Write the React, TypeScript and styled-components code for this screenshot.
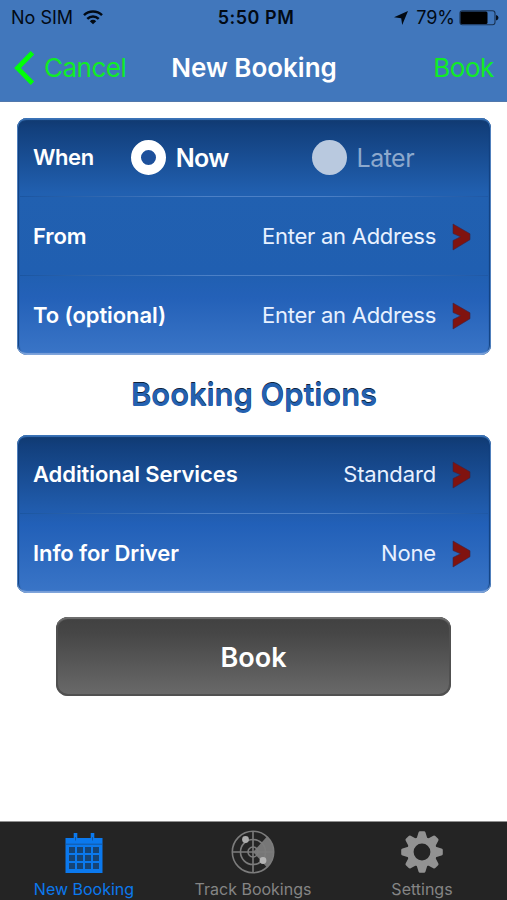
import React from "react";
import styled, { createGlobalStyle, css } from "styled-components";

const GlobalStyle = createGlobalStyle`
  * { box-sizing: border-box; }
  body { margin: 0; background: #fff; font-family: Inter, "Liberation Sans", sans-serif; }
`;

const Screen = styled.div`
  display: flex;
  flex-direction: column;
  width: 507px;
  height: 900px;
  overflow: hidden;
  background: #fff;
`;

interface TextProps {
  $size: number;
  $weight?: number;
  $track?: number;
  $color?: string;
}

const Text = styled.span<TextProps>`
  font-size: ${(p) => p.$size}px;
  font-weight: ${(p) => p.$weight ?? 400};
  letter-spacing: ${(p) => p.$track ?? 0}px;
  color: ${(p) => p.$color ?? "#fff"};
  line-height: 1.2;
  white-space: nowrap;
`;

const Header = styled.header`
  height: 102px;
  flex: none;
  background: #4177bc;
  border-bottom: 1px solid #5278ac;
`;

const StatusBar = styled.div`
  display: grid;
  grid-template-columns: 1fr auto 1fr;
  align-items: center;
  height: 34px;
  padding: 1px 8px 0 11px;
`;

const StatusSide = styled.div<{ $end?: boolean }>`
  display: flex;
  align-items: center;
  gap: 10px;
  ${(p) => p.$end && css`
    justify-content: flex-end;
    gap: 8px;
  `}
`;

const Clock = styled.div`
  display: flex;
  padding-left: 2px;
`;

const BatteryLevel = styled.div`
  display: flex;
  align-items: center;
  gap: 4px;
`;

const NavBar = styled.nav`
  display: grid;
  grid-template-columns: 1fr auto 1fr;
  align-items: center;
  height: 67px;
  padding: 0 13px 0 14px;
`;

const NavButton = styled.button<{ $end?: boolean }>`
  display: flex;
  align-items: center;
  gap: 9px;
  justify-self: ${(p) => (p.$end ? "end" : "start")};
  padding: 0;
  border: 0;
  background: none;
  font-family: inherit;
`;

const Content = styled.main`
  flex: 1;
  display: flex;
  flex-direction: column;
  padding: 16px 16px 0 17px;
`;

const Card = styled.section<{ $tall?: boolean }>`
  display: flex;
  flex-direction: column;
  flex: none;
  height: ${(p) => (p.$tall ? 237 : 158)}px;
  border-radius: 10px;
  padding: 0 1px;
  background: ${(p) =>
    p.$tall
      ? "linear-gradient(#10396f 0, #123f7c 10px, #2160b0 75px, #205fb1 155px, #2461b8 180px, #3a75c7 237px)"
      : "linear-gradient(#10396f 0, #123f7c 10px, #205bab 72px, #2260b8 90px, #3a75c7 158px)"};
  box-shadow:
    inset 0 3px 1px -1px #3a73b7,
    inset 0 -3px 1px -1px #7fa4da,
    inset 1px 0 0 #5080bd,
    inset -1px 0 0 #5080bd,
    inset 3px 0 1px -1px #11407f,
    inset -3px 0 1px -1px #11407f;
`;

const Row = styled.div`
  display: flex;
  align-items: center;
  flex: 1;
  padding: 0 19px 0 15px;
`;

const Divider = styled.div`
  height: 1px;
  margin: -1px 2px 0;
  background: linear-gradient(90deg, #1b55a0, #4c80c6 40%, #4c80c6 65%, #1f58a5);
`;

const Value = styled.div`
  display: flex;
  align-items: center;
  gap: 16px;
  margin-left: auto;
`;

const Option = styled.label<{ $left: number }>`
  display: flex;
  align-items: center;
  gap: 10px;
  margin-left: ${(p) => p.$left}px;
`;

const Radio = styled.span<{ $on?: boolean }>`
  width: 35px;
  height: 35px;
  border-radius: 50%;
  background: ${(p) => (p.$on ? "#1d509b" : "#b9c9df")};
  border: ${(p) => (p.$on ? "10px solid #fff" : "0")};
`;

const Heading = styled.h2`
  display: flex;
  align-items: center;
  justify-content: center;
  height: 80px;
  margin: 0;
  text-shadow: 0 -1px 0 #10233c;
`;

const BookButton = styled.button`
  align-self: center;
  display: flex;
  align-items: center;
  justify-content: center;
  width: 395px;
  height: 79px;
  margin: 24px 1px 0 0;
  padding: 3px 0 0;
  border: 0;
  border-radius: 12px;
  font-family: inherit;
  background: linear-gradient(#414141, #464646 20%, #6a6a6a);
  box-shadow: inset 0 3px 1px -1px #6e6e6e, inset 0 0 0 2px #505050;
`;

const TabBar = styled.footer`
  display: grid;
  grid-template-columns: repeat(3, 1fr);
  flex: none;
  height: 79px;
  background: #242424;
  border-top: 1px solid #909090;
`;

const Tab = styled.div`
  display: flex;
  flex-direction: column;
  align-items: center;
  padding: 8px 1px 0 0;
  gap: 5px;
`;

const TabIcon = styled.div`
  display: flex;
  align-items: center;
  height: 44px;
  margin-bottom: 1px;
`;

const GREEN = "#10ec25";
const BLUE = "#0b79ee";
const GREY = "#929292";

const Wifi = () => (
  <svg width="20" height="15" viewBox="0 0 20 15" fill="none" stroke="#020a14" strokeWidth="2.5">
    <path d="M1 5.2a13 13 0 0 1 18 0M4.3 8.8a8.2 8.2 0 0 1 11.4 0" />
    <path d="M6.8 11.2a4.7 4.7 0 0 1 6.4 0L10 14.3z" fill="#020a14" stroke="none" />
  </svg>
);

const LocationArrow = () => (
  <svg width="14" height="14" viewBox="0 0 14 14">
    <path d="M14 0 8.2 14 7.2 7.2 0 6.2z" fill="#020a14" />
  </svg>
);

const Battery = () => (
  <svg width="40" height="16" viewBox="0 0 40 16">
    <rect x="1" y="0.7" width="35" height="14" rx="2.5" fill="none" stroke="#183150" strokeWidth="1.1" />
    <rect x="1.500" y="1.500" width="27" height="12.500" rx="1.500" fill="#000" />
    <path d="M37 5q2.500.5 2.500 2.800T37 10.600z" fill="#06101d" />
  </svg>
);

const BackArrow = () => (
  <svg width="21" height="34" viewBox="0 0 21 34">
    <path d="M18.500 1.800 3.500 17l15 15.200" fill="none" stroke="#00ff08" strokeWidth="4.800" />
  </svg>
);

const Chevron = () => (
  <svg width="19" height="28" viewBox="0 0 19 28">
    <path d="M1 1 18 10.800v5.900L1 27v-9.500l7.500-3.700L1 10.500z" fill="#80130f" stroke="#3a2548" strokeOpacity=".6" strokeWidth="1" />
  </svg>
);

const CalendarIcon = () => (
  <svg width="38" height="41" viewBox="0 0 38 41">
    <path d="M.5 6h37v35H.5z" fill={BLUE} />
    <path d="M10.500 1v7M27.500 1v7" stroke={BLUE} strokeWidth="3.600" />
    <path d="M10.500 5v3.500M27.500 5v3.500M1 12.200h36" stroke="#1557a0" strokeWidth="1" />
    {[15, 23, 31].map((y) =>
      [4, 12, 20, 28].map((x) => (
        <rect key={`${x}-${y}`} x={x} y={y} width="6" height="6" fill="#164476" />
      )),
    )}
  </svg>
);

const RadarIcon = () => (
  <svg width="44" height="44" viewBox="0 0 44 44">
    <path d="M22 22 36 6.500A21 21 0 0 1 36 37.500z" fill="#777" />
    <g fill="none" stroke="#7c7c7c" strokeWidth="1.600">
      <circle cx="22" cy="22" r="20.700" />
      <circle cx="22" cy="22" r="12.500" />
      <circle cx="22" cy="22" r="5" />
      <path d="M22 1.500v41M1.500 22h41" />
    </g>
    <circle cx="14.500" cy="9.500" r="3.400" fill="#adadad" />
    <circle cx="32" cy="30.500" r="3.400" fill="#b5b5b5" />
  </svg>
);

const GearIcon = () => (
  <svg width="42" height="42" viewBox="-21 -21 42 42">
    <g fill={GREY}>
      {[0, 45, 90, 135, 180, 225, 270, 315].map((a) => (
        <path key={a} d="M-5.500-13-3.500-19.500Q-3.200-20.800-2-20.800H2Q3.200-20.800 3.500-19.500L5.500-13z" transform={`rotate(${a})`} />
      ))}
    </g>
    <circle r="11.700" fill="none" stroke={GREY} strokeWidth="6.600" />
  </svg>
);

interface DetailRowProps {
  label: string;
  value: string;
  track?: number;
  valueTrack?: number;
}

const DetailRow = ({ label, value, track = -0.08, valueTrack = -0.15 }: DetailRowProps) => (
  <Row>
    <Text $size={22} $weight={570} $track={track}>{label}</Text>
    <Value>
      <Text $size={22} $track={valueTrack} $color="#e8f1ff">{value}</Text>
      <Chevron />
    </Value>
  </Row>
);

export default function App() {
  return (
    <Screen>
      <GlobalStyle />
      <Header>
        <StatusBar>
          <StatusSide>
            <Text $size={18} $color="#020a14">No SIM</Text>
            <Wifi />
          </StatusSide>
          <Clock>
            <Text $size={18} $weight={600} $track={0.5} $color="#020a14">5:50 PM</Text>
          </Clock>
          <StatusSide $end>
            <LocationArrow />
            <BatteryLevel>
              <Text $size={18} $color="#020a14">79%</Text>
              <Battery />
            </BatteryLevel>
          </StatusSide>
        </StatusBar>
        <NavBar>
          <NavButton>
            <BackArrow />
            <Text $size={26} $track={-0.5} $color={GREEN}>Cancel</Text>
          </NavButton>
          <Text $size={26} $weight={580}>New Booking</Text>
          <NavButton $end>
            <Text $size={26} $track={-0.4} $color={GREEN}>Book</Text>
          </NavButton>
        </NavBar>
      </Header>
      <Content>
        <Card $tall>
          <Row>
            <Text $size={22} $weight={570} $track={-0.4}>When</Text>
            <Option $left={37}>
              <Radio $on />
              <Text $size={25} $weight={560} $track={-0.7}>Now</Text>
            </Option>
            <Option $left={83}>
              <Radio />
              <Text $size={25} $track={-0.5} $color="#8da9cd">Later</Text>
            </Option>
          </Row>
          <Divider />
          <DetailRow label="From" value="Enter an Address" valueTrack={-0.26} />
          <Divider />
          <DetailRow label="To (optional)" value="Enter an Address" valueTrack={-0.26} />
        </Card>
        <Heading>
          <Text $size={31} $weight={580} $track={-0.08} $color="#2461b0">Booking Options</Text>
        </Heading>
        <Card>
          <DetailRow label="Additional Services" value="Standard" />
          <Divider />
          <DetailRow label="Info for Driver" value="None" />
        </Card>
        <BookButton>
          <Text $size={27} $weight={560}>Book</Text>
        </BookButton>
      </Content>
      <TabBar>
        <Tab>
          <TabIcon><CalendarIcon /></TabIcon>
          <Text $size={16} $color={BLUE}>New Booking</Text>
        </Tab>
        <Tab>
          <TabIcon><RadarIcon /></TabIcon>
          <Text $size={16} $color="#858585">Track Bookings</Text>
        </Tab>
        <Tab>
          <TabIcon><GearIcon /></TabIcon>
          <Text $size={16} $color="#858585">Settings</Text>
        </Tab>
      </TabBar>
    </Screen>
  );
}
